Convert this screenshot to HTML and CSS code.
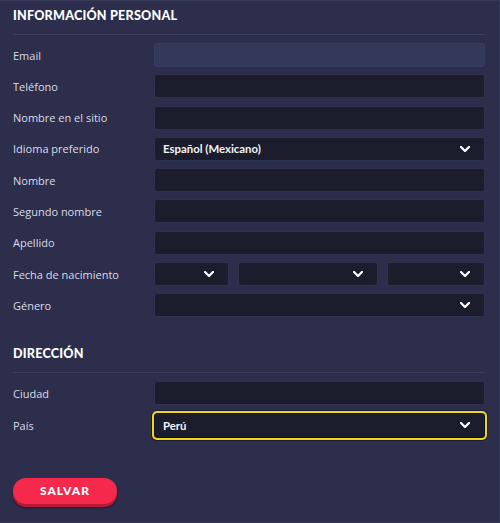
FILE: index.html
```html
<!DOCTYPE html>
<html lang="es">
<head>
<meta charset="utf-8">
<title>Información personal</title>
<link rel="stylesheet" href="styles.css">
</head>
<body>
<div class="panel">
  <section class="section">
    <h2 class="heading">INFORMACIÓN PERSONAL</h2>
    <div class="rows">
      <div class="row"><span class="label">Email</span><div class="field field-disabled"></div></div>
      <div class="row"><span class="label">Teléfono</span><div class="field"></div></div>
      <div class="row"><span class="label">Nombre en el sitio</span><div class="field"></div></div>
      <div class="row"><span class="label">Idioma preferido</span>
        <div class="field select"><span class="value">Español (Mexicano)</span><svg class="chev" viewBox="0 0 10 6"><polyline points="1,1 5,5 9,1"/></svg></div>
      </div>
      <div class="row"><span class="label">Nombre</span><div class="field"></div></div>
      <div class="row"><span class="label">Segundo nombre</span><div class="field"></div></div>
      <div class="row"><span class="label">Apellido</span><div class="field"></div></div>
      <div class="row"><span class="label">Fecha de nacimiento</span>
        <div class="date">
          <div class="field select"><span class="value"></span><svg class="chev" viewBox="0 0 10 6"><polyline points="1,1 5,5 9,1"/></svg></div>
          <div class="field select"><span class="value"></span><svg class="chev" viewBox="0 0 10 6"><polyline points="1,1 5,5 9,1"/></svg></div>
          <div class="field select"><span class="value"></span><svg class="chev" viewBox="0 0 10 6"><polyline points="1,1 5,5 9,1"/></svg></div>
        </div>
      </div>
      <div class="row"><span class="label">Género</span>
        <div class="field select"><span class="value"></span><svg class="chev" viewBox="0 0 10 6"><polyline points="1,1 5,5 9,1"/></svg></div>
      </div>
    </div>
  </section>
  <section class="section section-address">
    <h2 class="heading">DIRECCIÓN</h2>
    <div class="rows">
      <div class="row"><span class="label">Ciudad</span><div class="field"></div></div>
      <div class="row"><span class="label">País</span>
        <div class="field select focused"><span class="value">Perú</span><svg class="chev" viewBox="0 0 10 6"><polyline points="1,1 5,5 9,1"/></svg></div>
      </div>
    </div>
  </section>
  <div class="actions">
    <button class="btn-save">SALVAR</button>
  </div>
</div>
</body>
</html>
```

FILE: styles.css
```css
* { box-sizing: border-box; }
html, body { margin: 0; padding: 0; }
body {
  background: #2c2e4b;
  font-family: "Open Sans", Lato, sans-serif;
  color: #d6d8e4;
}
.panel {
  width: 500px;
  height: 523px;
  border-top: 1px solid #363958;
  border-right: 1px solid #363958;
  border-bottom: 1px solid #363958;
  padding: 0 14px 0 13px;
}
.section { display: flex; flex-direction: column; }
.heading {
  margin: 0;
  height: 34px;
  padding-top: 7px;
  font-family: Lato, sans-serif;
  font-size: 12.6px;
  font-weight: 900;
  color: #ffffff;
  letter-spacing: 0.2px;
  border-bottom: 1px solid #3a3d5d;
  margin-bottom: 8px;
}
.section-address { margin-top: 21px; }
.section-address .heading { height: 35px; padding-top: 8px; margin-bottom: 8px; }
.rows { display: flex; flex-direction: column; gap: 7.3px; }
.row {
  display: grid;
  grid-template-columns: 141px 1fr;
  align-items: center;
  height: 24px;
}
.label { font-size: 11px; color: #dadce8; }
.field {
  height: 24px;
  background: #1b1c2c;
  border: 1px solid #2f3150;
  border-radius: 3px;
  display: flex;
  align-items: center;
  padding: 0 9px 0 8px;
}
.field-disabled { background: #343859; border-color: #383c5e; }
.select { justify-content: space-between; }
.value { font-family: Lato, sans-serif; font-size: 11.4px; font-weight: 700; color: #f2f3f8; }
.chev { width: 10px; height: 6px; margin-right: 5px; }
.chev polyline { fill: none; stroke: #ffffff; stroke-width: 2.2; stroke-linecap: square; }
.date { display: grid; grid-template-columns: 75px 140px 1fr; gap: 9px; }
.focused {
  height: 25px;
  border: 1px solid #11122a;
  box-shadow: 0 0 0 2px #efd812, 0 0 0 3px #1a1b3a;
}
.actions { margin-top: 41px; }
.btn-save {
  width: 104px;
  height: 26px;
  border: none;
  border-radius: 14px;
  background: #f6284b;
  color: #ffffff;
  font-family: Lato, sans-serif;
  font-weight: 900;
  font-size: 12px;
  letter-spacing: 1px;
  box-shadow: 0 3px 0 #b51a37, 0 4px 2px rgba(10, 10, 30, 0.6);
  padding: 0;
}
```
